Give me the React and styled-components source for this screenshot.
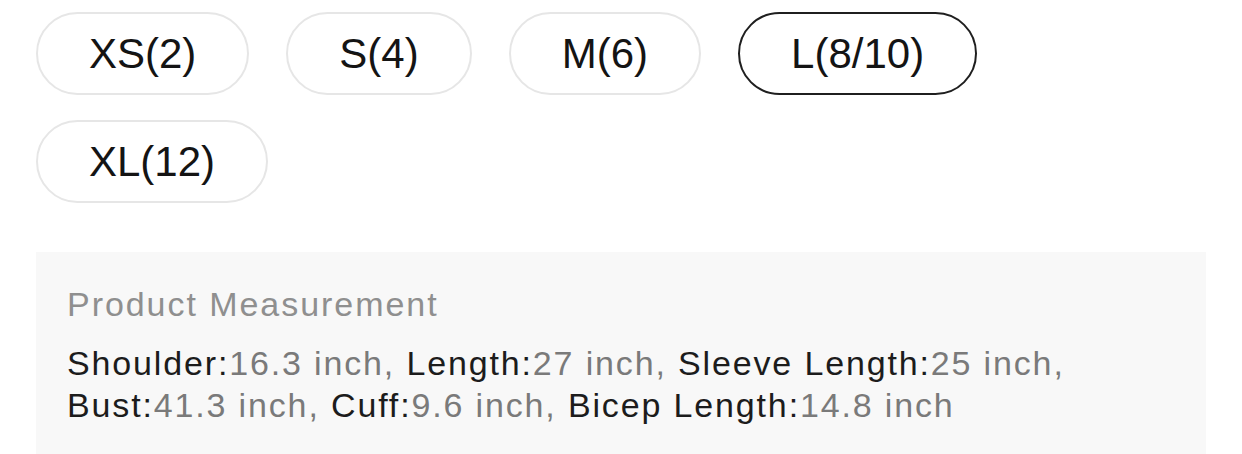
import React from "react";
import styled, { createGlobalStyle } from "styled-components";

const Global = createGlobalStyle`
  html, body { margin: 0; padding: 0; background: #ffffff; }
  body { font-family: "Liberation Sans", Arial, sans-serif; }
  * { box-sizing: border-box; }
`;

const Page = styled.div`
  padding: 12px 36px 0 36px;
  display: flex;
  flex-direction: column;
  gap: 49px;
`;

const SizeGrid = styled.div`
  display: flex;
  flex-wrap: wrap;
  column-gap: 37px;
  row-gap: 25px;
  max-width: 1000px;
`;

const SizeButton = styled.button`
  height: 83px;
  padding: 0 51px;
  border-radius: 42px;
  border: 2px solid ${(p) => (p.$selected ? "#1f1f1f" : "#e6e6e6")};
  background: #ffffff;
  color: #141414;
  font-family: "Liberation Sans", Arial, sans-serif;
  font-size: 42px;
  line-height: 1;
  display: flex;
  align-items: center;
  justify-content: center;
  white-space: nowrap;
  cursor: pointer;
`;

const Panel = styled.section`
  background: #f8f8f8;
  padding: 32px 31px 32px 31px;
`;

const Title = styled.div`
  font-size: 34px;
  line-height: 40px;
  letter-spacing: 1.95px;
  color: #8f8f8f;
  margin-bottom: 18px;
`;

const Spec = styled.p`
  margin: 0;
  font-size: 34px;
  line-height: 42px;
  letter-spacing: 1.85px;
  color: #1c1c1c;
`;

const Value = styled.span`
  color: #7a7a7a;
`;

const sizes = [
  { label: "XS(2)" },
  { label: "S(4)" },
  { label: "M(6)" },
  { label: "L(8/10)", selected: true },
  { label: "XL(12)" },
];

const specs = [
  ["Shoulder", "16.3 inch"],
  ["Length", "27 inch"],
  ["Sleeve Length", "25 inch"],
  ["Bust", "41.3 inch"],
  ["Cuff", "9.6 inch"],
  ["Bicep Length", "14.8 inch"],
];

export default function App() {
  return (
    <>
      <Global />
      <Page>
        <SizeGrid>
          {sizes.map((s) => (
            <SizeButton key={s.label} $selected={s.selected}>
              {s.label}
            </SizeButton>
          ))}
        </SizeGrid>
        <Panel>
          <Title>Product Measurement</Title>
          <Spec>
            {specs.map(([k, v], i) => (
              <React.Fragment key={k}>
                {k}:<Value>{v}{i < specs.length - 1 ? "," : ""}</Value>
                {i < specs.length - 1 ? " " : ""}
              </React.Fragment>
            ))}
          </Spec>
        </Panel>
      </Page>
    </>
  );
}
